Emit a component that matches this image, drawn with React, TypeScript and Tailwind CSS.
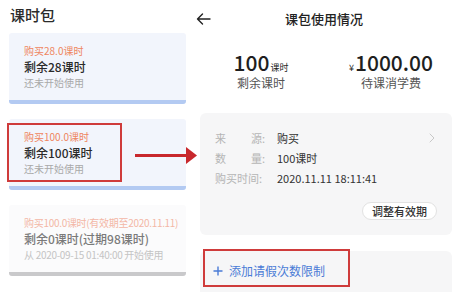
import React from 'react';

const font = { fontFamily: '"Noto Sans CJK SC", "Noto Sans", sans-serif' };

type Pack = {
  bought: string;
  left: string;
  note: string;
  faded?: boolean;
};

const packs: Pack[] = [
  { bought: '购买28.0课时', left: '剩余28课时', note: '还未开始使用' },
  { bought: '购买100.0课时', left: '剩余100课时', note: '还未开始使用' },
  {
    bought: '购买100.0课时(有效期至2020.11.11)',
    left: '剩余0课时(过期98课时)',
    note: '从 2020-09-15 01:40:00 开始使用',
    faded: true,
  },
];

const PackCard: React.FC<{ pack: Pack }> = ({ pack }) => (
  <div className={`rounded-[3px] overflow-hidden ${pack.faded ? 'bg-[#fbfbfc]' : 'bg-[#f2f5fc]'}`}>
    <div className="pl-[15px] pt-[11px] pb-[10px] whitespace-nowrap">
      <div className={`text-[10px] leading-[14px] ${pack.faded ? 'text-[#f3b7a6] tracking-[-0.3px]' : 'text-[#ef8560]'}`}>
        {pack.bought}
      </div>
      <div className={`text-[12px] leading-[18px] font-medium ${pack.faded ? 'text-[#7a7a7a]' : 'text-[#2a2a2a]'}`}>
        {pack.left}
      </div>
      <div className={`text-[10px] leading-[14px] ${pack.faded ? 'text-[#c4c4c4] tracking-[-0.3px]' : 'text-[#a9a9a9]'}`}>
        {pack.note}
      </div>
    </div>
    <div className={`h-[4px] ${pack.faded ? 'bg-[#c9c9cb]' : 'bg-[#b3caf2]'}`} />
  </div>
);

const rows = [
  { label: ['来', '源:'], value: '购买' },
  { label: ['数', '量:'], value: '100课时' },
  { label: ['购买时间:'], value: '2020.11.11 18:11:41' },
];

export default function App() {
  return (
    <div className="relative w-[464px] h-[292px] overflow-hidden bg-white flex" style={font}>
      {/* left: package list */}
      <div className="w-[190px] shrink-0 pl-[9px] pr-[4px]">
        <div className="pt-[6px] pl-[1px] text-[15px] leading-[18px] text-[#2b2b2b] font-medium">课时包</div>
        <div className="mt-[9px] flex flex-col gap-[15px]">
          {packs.map((p, i) => (
            <PackCard key={i} pack={p} />
          ))}
        </div>
      </div>

      {/* right: detail page */}
      <div className="flex-1 pl-[10px] pr-[12px]">
        <div className="h-[38px] grid grid-cols-[1fr_auto_1fr] items-center -ml-[4px]">
          <svg width="15" height="12" viewBox="0 0 15 12" fill="none" stroke="#222" strokeWidth="1.4" strokeLinecap="round" strokeLinejoin="round">
            <path d="M14 6H1.5M6.5 1L1.5 6l5 5" />
          </svg>
          <div className="text-[13px] leading-[18px] text-[#222] font-medium">课包使用情况</div>
          <div />
        </div>

        <div className="grid grid-cols-2 -ml-[4px] -mr-[4px] mt-[13px]">
          <div className="flex flex-col items-center">
            <div className="h-[22px] flex items-baseline text-[#1f1f1f]">
              <span className="text-[21px] leading-[22px] font-medium">100</span>
              <span className="text-[9px] leading-[22px] ml-[1px]">课时</span>
            </div>
            <div className="mt-[3px] text-[12px] leading-[14px] text-[#555]">剩余课时</div>
          </div>
          <div className="flex flex-col items-center">
            <div className="h-[22px] flex items-baseline text-[#1f1f1f]">
              <span className="text-[9px] leading-[22px] mr-[1px]">¥</span>
              <span className="text-[21px] leading-[22px] font-medium">1000.00</span>
            </div>
            <div className="mt-[3px] text-[12px] leading-[14px] text-[#555]">待课消学费</div>
          </div>
        </div>

        <div className="mt-[23px] rounded-[6px] bg-[#f6f6f7] pt-[15px] pb-[15px] pl-[15px] pr-[15px]">
          {rows.map((r, i) => (
            <div key={i} className="relative h-[20px] flex items-center text-[11px] leading-[14px] whitespace-nowrap">
              <div
                className={`w-[50px] shrink-0 text-[#b5b5b5] flex ${r.label.length > 1 ? 'justify-between' : ''}`}
              >
                {r.label.map((t, j) => (
                  <span key={j}>{t}</span>
                ))}
              </div>
              <div className="ml-[12px] text-[#333]">{r.value}</div>
              {i === 0 && (
                <svg className="absolute right-[2px]" width="6" height="10" viewBox="0 0 6 10" fill="none" stroke="#c8c8c8" strokeWidth="1" strokeLinecap="round" strokeLinejoin="round">
                  <path d="M1 1l4 4-4 4" />
                </svg>
              )}
            </div>
          ))}
          <div className="mt-[14px] flex justify-end">
            <div className="h-[18px] px-[9px] rounded-full bg-white border border-[#e2e2e2] text-[11px] leading-[16px] font-medium text-[#333]">
              调整有效期
            </div>
          </div>
        </div>

        <div className="mt-[16px] rounded-[6px] bg-[#f6f6f7] h-[50px] pl-[13px] pt-[12px] flex items-start gap-[6px] text-[#4a7bd6]">
          <svg className="mt-[3px]" width="10" height="10" viewBox="0 0 10 10" stroke="#4a7bd6" strokeWidth="1.4">
            <path d="M5 0.5v9M0.5 5h9" />
          </svg>
          <span className="text-[12px] leading-[16px]">添加请假次数限制</span>
        </div>
      </div>

      {/* annotations */}
      <div className="absolute left-[7px] top-[123px] w-[115px] h-[59px] border-2 border-[#cf3b3b]" />
      <div className="absolute left-[203px] top-[249px] w-[147px] h-[38px] border-2 border-[#cf3b3b]" />
      <svg className="absolute left-[134px] top-[146px]" width="64" height="19" viewBox="0 0 64 19">
        <rect x="1" y="8" width="52" height="3" fill="#c8282d" />
        <path d="M52 1L63 9.5 52 18z" fill="#c8282d" />
      </svg>
    </div>
  );
}
